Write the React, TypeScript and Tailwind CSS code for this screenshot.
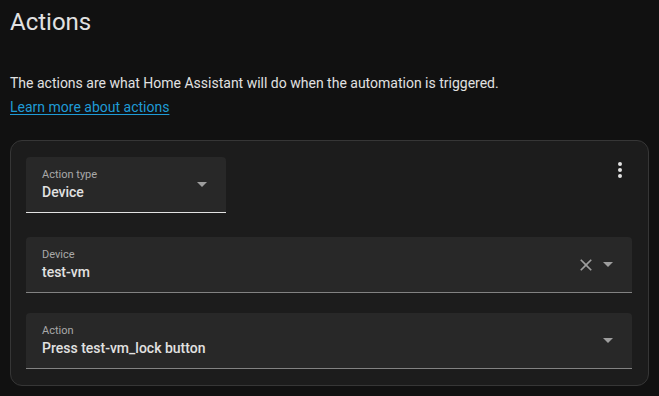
import { ReactNode } from "react"

function Arrow() {
  return (
    <svg width="10" height="5" viewBox="0 0 10 5" className="shrink-0">
      <polygon points="0,0 10,0 5,5" fill="#9e9e9e" />
    </svg>
  )
}

function Field({
  label,
  value,
  active,
  extra,
  className,
}: {
  label: string
  value: string
  active?: boolean
  extra?: ReactNode
  className?: string
}) {
  return (
    <div
      className={`flex h-14 items-center rounded-t-[4px] border-b bg-[#282828] pl-4 pr-[19px] ${
        active ? "border-[#e2e2e2]" : "border-[#828282]"
      } ${className ?? ""}`}
    >
      <div className="flex h-full flex-1 flex-col pt-[11px]">
        <div className="text-[11px] leading-[14px] text-[#a9a9a9]">{label}</div>
        <div className="text-[14px] leading-[20px] font-medium text-[#e1e1e1]">{value}</div>
      </div>
      {extra}
      <Arrow />
    </div>
  )
}

export default function App() {
  return (
    <div className="min-h-screen bg-[#111111] px-[10px] font-['Roboto',sans-serif] text-[#e1e1e1]">
      <h1 className="pt-[6px] text-[24px] leading-[32px] font-normal">Actions</h1>

      <div className="mt-[33px] text-[14px] leading-[24px]">
        <p>The actions are what Home Assistant will do when the automation is triggered.</p>
        <a href="#" className="text-[#1f9bd6] underline underline-offset-2">
          Learn more about actions
        </a>
      </div>

      <div className="mt-[21px] rounded-xl border border-[#363636] bg-[#1c1c1c] pt-4 pb-4 pl-[15px] pr-4">
        <div className="flex items-start justify-between">
          <Field label="Action type" value="Device" active className="w-[200px]" />
          <button className="mt-px h-6 w-6 text-[#e1e1e1]">
            <svg viewBox="0 0 24 24" width="24" height="24" fill="currentColor">
              <path d="M12,16A2,2 0 0,1 14,18A2,2 0 0,1 12,20A2,2 0 0,1 10,18A2,2 0 0,1 12,16M12,10A2,2 0 0,1 14,12A2,2 0 0,1 12,14A2,2 0 0,1 10,12A2,2 0 0,1 12,10M12,4A2,2 0 0,1 14,6A2,2 0 0,1 12,8A2,2 0 0,1 10,6A2,2 0 0,1 12,4Z" />
            </svg>
          </button>
        </div>

        <Field
          label="Device"
          value="test-vm"
          className="mt-6"
          extra={
            <svg viewBox="0 0 24 24" width="20" height="20" className="mr-[7px] shrink-0" fill="#9e9e9e">
              <path d="M19,6.41L17.59,5L12,10.59L6.41,5L5,6.41L10.59,12L5,17.59L6.41,19L12,13.41L17.59,19L19,17.59L13.41,12L19,6.41Z" />
            </svg>
          }
        />

        <Field label="Action" value="Press test-vm_lock button" className="mt-5" />
      </div>
    </div>
  )
}
